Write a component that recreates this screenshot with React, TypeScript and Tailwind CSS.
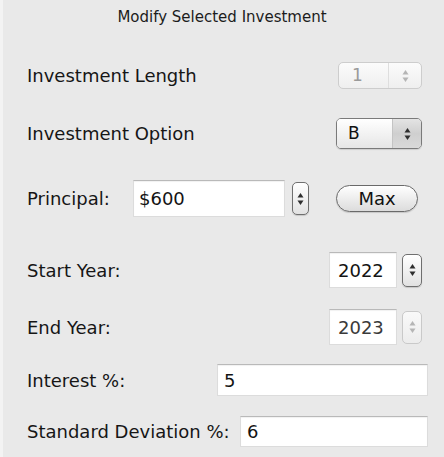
import React from "react";

const font = { fontFamily: '"DejaVu Sans", "Lucida Grande", sans-serif' };

function Arrows({ disabled = false }: { disabled?: boolean }) {
  const c = disabled ? "#b5b5b5" : "#2e2e2e";
  return (
    <svg width="7" height="16" viewBox="0 0 7 16">
      <path d="M3.5 2 L6.5 6.5 L0.5 6.5 Z" fill={c} />
      <path d="M3.5 14 L6.5 9.5 L0.5 9.5 Z" fill={c} />
    </svg>
  );
}

function Stepper({ disabled = false, w = "w-[20px]", h = "h-[33px]" }: { disabled?: boolean; w?: string; h?: string }) {
  return (
    <div
      className={`${w} ${h} rounded-[5px] border flex items-center justify-center ${
        disabled
          ? "border-[#c9c9c9] bg-gradient-to-b from-[#f9f9f9] to-[#ececec]"
          : "border-[#6f6f6f] bg-gradient-to-b from-[#ffffff] to-[#e2e2e2] shadow-[0_1px_1px_rgba(0,0,0,0.15)]"
      }`}
    >
      <Arrows disabled={disabled} />
    </div>
  );
}

function TextField({ value, className, disabled = false }: { value: string; className: string; disabled?: boolean }) {
  return (
    <div
      className={`${className} bg-white border border-[#dcdcdc] border-t-[#b9b9b9] shadow-[inset_0_1px_1px_rgba(0,0,0,0.06)] flex items-center text-[18px] ${
        disabled ? "text-[#3a3a3a]" : "text-[#141414]"
      }`}
    >
      {value}
    </div>
  );
}

export default function App() {
  return (
    <div className="w-[444px] h-[457px] bg-[#e9e9e9] text-[#161616] flex flex-col border-l-[3px] border-[#f3f3f3]" style={font}>
      <div className="h-[34px] flex items-center justify-center text-[15px] text-[#1c1c1c] pr-[3px]">
        Modify Selected Investment
      </div>

      <div className="mt-[28px] h-[27px] flex items-center pl-[24px] pr-[22px]">
        <span className="text-[18px]">Investment Length</span>
        <div className="ml-auto w-[84px] h-[27px] rounded-[5px] border border-[#cdcdcd] bg-gradient-to-b from-[#fbfbfb] to-[#efefef] flex items-center">
          <span className="pl-[13px] text-[17px] text-[#9a9a9a] flex-1">1</span>
          <div className="w-[33px] h-full border-l border-[#dedede] flex items-center justify-center">
            <Arrows disabled />
          </div>
        </div>
      </div>

      <div className="mt-[29px] h-[31px] flex items-center pl-[24px] pr-[22px]">
        <span className="text-[18px]">Investment Option</span>
        <div className="ml-auto w-[86px] h-[31px] rounded-[5px] border border-[#7a7a7a] overflow-hidden flex shadow-[0_1px_1px_rgba(0,0,0,0.12)]">
          <div className="flex-1 flex items-center pl-[11px] text-[17px] text-[#111] bg-gradient-to-b from-[#ffffff] to-[#e6e6e6]">B</div>
          <div className="w-[29px] h-full border-l border-[#c4c4c4] flex items-center justify-center bg-gradient-to-b from-[#e4e4e4] via-[#cfcfcf] to-[#d9d9d9]">
            <Arrows />
          </div>
        </div>
      </div>

      <div className="mt-[31px] h-[37px] flex items-center pl-[24px]">
        <span className="w-[106px] text-[18px]">Principal:</span>
        <TextField value="$600" className="w-[152px] h-[37px] pl-[5px]" />
        <div className="ml-[7px]">
          <Stepper w="w-[17px]" h="h-[33px]" />
        </div>
        <div className="ml-[27px] w-[82px] h-[27px] rounded-full border border-[#6a6a6a] bg-gradient-to-b from-[#ffffff] to-[#dcdcdc] flex items-center justify-center text-[18px] text-[#111] shadow-[0_1px_1px_rgba(0,0,0,0.15)]">
          Max
        </div>
      </div>

      <div className="mt-[35px] h-[36px] flex items-center pl-[24px] pr-[22px]">
        <span className="text-[18px]">Start Year:</span>
        <TextField value="2022" className="ml-auto w-[68px] h-[36px] pl-[8px]" />
        <div className="ml-[5px]">
          <Stepper />
        </div>
      </div>

      <div className="mt-[21px] h-[36px] flex items-center pl-[24px] pr-[22px]">
        <span className="text-[18px]">End Year:</span>
        <TextField value="2023" className="ml-auto w-[68px] h-[36px] pl-[8px]" disabled />
        <div className="ml-[5px]">
          <Stepper disabled />
        </div>
      </div>

      <div className="mt-[19px] h-[32px] flex items-center pl-[24px]">
        <span className="w-[190px] text-[18px]">Interest %:</span>
        <TextField value="5" className="w-[211px] h-[32px] pl-[6px]" />
      </div>

      <div className="mt-[20px] h-[31px] flex items-center pl-[24px]">
        <span className="w-[213px] text-[18px]">Standard Deviation %:</span>
        <TextField value="6" className="w-[188px] h-[31px] pl-[6px]" />
      </div>
    </div>
  );
}
